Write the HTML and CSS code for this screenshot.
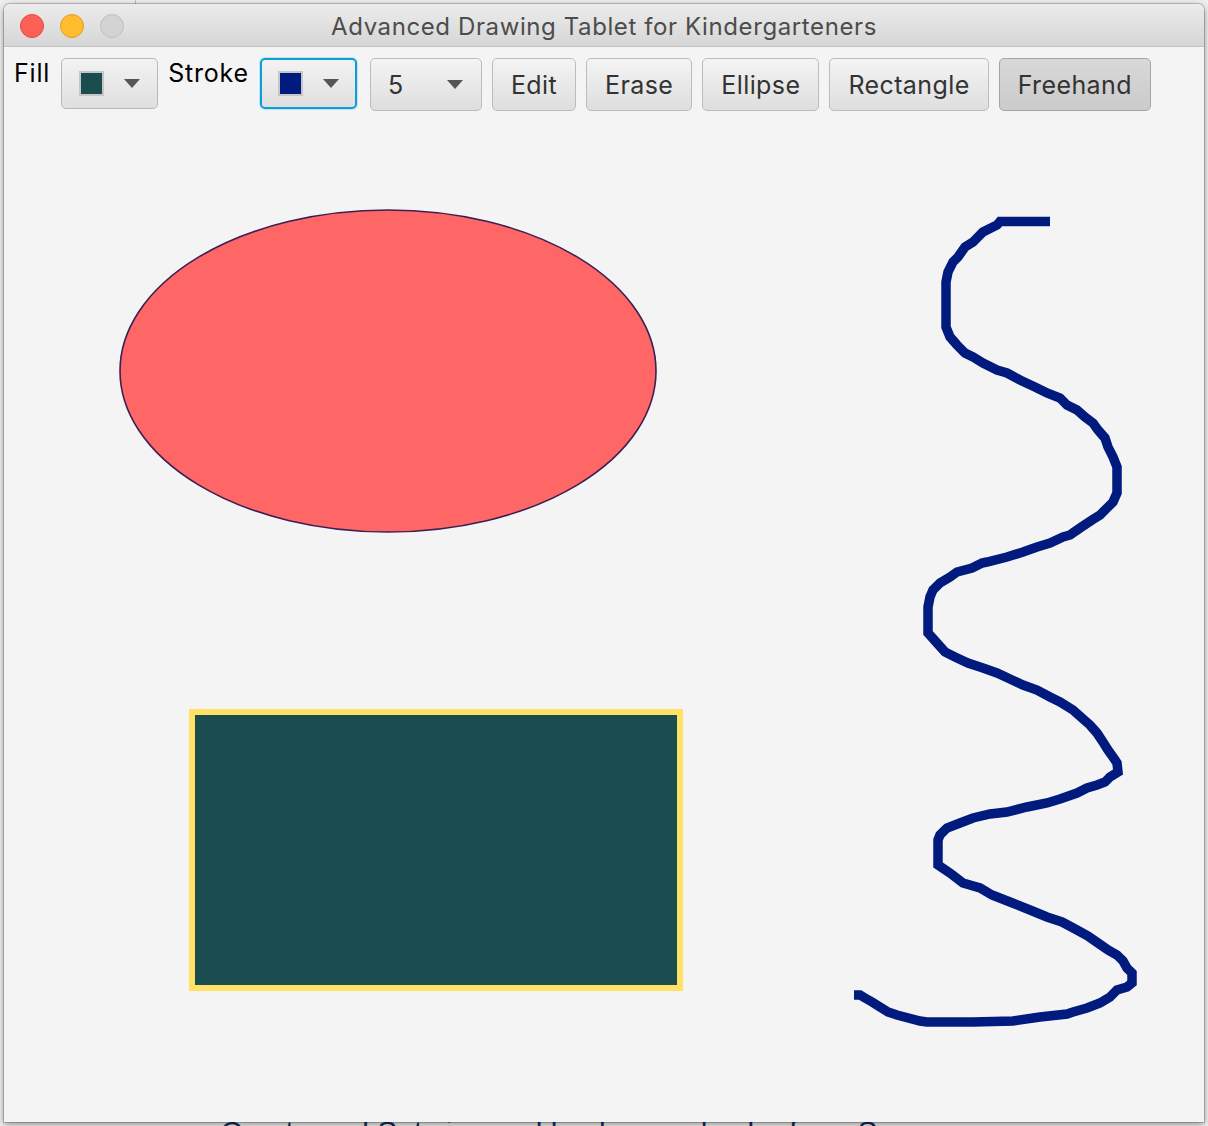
FILE: index.html
```html
<!DOCTYPE html>
<html>
<head>
<meta charset="utf-8">
<title>Advanced Drawing Tablet for Kindergarteners</title>
<link rel="stylesheet" href="styles.css">
</head>
<body>
<div class="desktop">
  <div class="doc-behind">
    <div class="doc-rule"></div>
    <div class="doc-line"><span class="doc-bullet">•</span><span class="doc-text">Create and Set size and background color for a Scene</span></div>
  </div>

  <div class="window">
    <div class="titlebar">
      <div class="lights">
        <span class="light light-close"></span>
        <span class="light light-min"></span>
        <span class="light light-max"></span>
      </div>
      <div class="title">Advanced Drawing Tablet for Kindergarteners</div>
    </div>

    <div class="toolbar">
      <span class="label">Fill</span>
      <div class="picker">
        <span class="swatch swatch-fill"></span>
        <span class="arrow"></span>
      </div>
      <span class="label">Stroke</span>
      <div class="picker picker-focused">
        <span class="swatch swatch-stroke"></span>
        <span class="arrow"></span>
      </div>
      <div class="btn combo">
        <span class="combo-value">5</span>
        <span class="arrow"></span>
      </div>
      <div class="btn">Edit</div>
      <div class="btn">Erase</div>
      <div class="btn">Ellipse</div>
      <div class="btn">Rectangle</div>
      <div class="btn btn-selected">Freehand</div>
    </div>

    <div class="canvas">
      <svg class="drawing" viewBox="4 120 1200 1002" preserveAspectRatio="xMinYMin meet" xmlns="http://www.w3.org/2000/svg">
        <ellipse cx="388" cy="371" rx="268" ry="161" fill="#ff6666" stroke="#3d1f55" stroke-width="1.6"/>
        <rect x="192" y="712" width="488" height="276" fill="#1b4d50" stroke="#ffe265" stroke-width="6"/>
        <polyline fill="none" stroke="#001a7d" stroke-width="9.5" stroke-linejoin="miter" stroke-miterlimit="2" stroke-linecap="butt"
          points="1050,221.5 1000,221.5 997,225 983,232 973,242 965,247 958,257 953,262 948,272 946,282 946,288 946,327 950,337 957,345 965,353 973,357 983,363 997,370 1007,373 1020,380 1037,388 1047,393 1060,398 1067,405 1077,410 1085,417 1093,423 1098,430 1105,438 1108,447 1113,457 1117,467 1117,477 1117,493 1113,502 1107,508 1100,515 1092,520 1080,528 1070,535 1063,537 1050,543 1037,547 1023,552 1007,557 987,562 982,563 972,568 957,572 950,577 940,583 933,590 930,597 928,607 928,620 928,633 937,643 945,652 955,657 968,663 983,668 997,673 1010,679 1023,685 1037,690 1050,697 1060,702 1073,710 1082,718 1090,725 1097,733 1103,742 1108,750 1113,757 1117,763 1118,772 1110,777 1105,782 1097,785 1087,788 1077,793 1060,799 1047,803 1027,807 1007,812 990,814 973,818 960,823 947,828 940,835 938,840 938,865 950,873 963,883 980,888 992,895 1010,902 1030,910 1047,917 1062,922 1077,930 1088,936 1098,943 1108,950 1117,955 1123,961 1127,968 1132,973 1132,983 1127,987 1117,990 1110,997 1100,1003 1087,1008 1073,1012 1067,1014 1040,1017 1013,1021 973,1022 927,1022 920,1021 897,1015 888,1012 880,1007 872,1002 865,998 860,995 854,995"/>
      </svg>
    </div>
  </div>
</div>
</body>
</html>
```

FILE: styles.css
```css
* {
  box-sizing: border-box;
}

html, body {
  margin: 0;
  padding: 0;
}

body {
  width: 1208px;
  height: 1126px;
  overflow: hidden;
  background: #efefef;
  font-family: Inter, "Noto Sans", "Liberation Sans", sans-serif;
}

.desktop {
  position: relative;
  width: 1208px;
  height: 1126px;
  overflow: hidden;
  background: #f0f0f0;
}

/* Document lying behind the window */
.doc-behind {
  position: absolute;
  inset: 0;
}

.doc-rule {
  position: absolute;
  left: 135px;
  top: 0;
  width: 1px;
  height: 6px;
  background: #bcbcbc;
}

.doc-line {
  position: absolute;
  left: 152px;
  top: 1116px;
  display: flex;
  gap: 58px;
  font-family: "Liberation Sans", Arial, sans-serif;
  font-size: 30px;
  line-height: 32px;
  white-space: nowrap;
}

.doc-bullet {
  color: #222;
}

.doc-text {
  color: #1b2a5e;
}

/* Window */
.window {
  position: absolute;
  left: 4px;
  top: 4px;
  width: 1200px;
  height: 1118px;
  display: flex;
  flex-direction: column;
  background: #f4f4f4;
  border-radius: 6px 6px 0 0;
  box-shadow: 0 0 0 1px rgba(0, 0, 0, 0.18), 0 2px 7px rgba(0, 0, 0, 0.45);
  overflow: hidden;
}

.titlebar {
  position: relative;
  height: 43px;
  flex: none;
  display: flex;
  align-items: center;
  justify-content: center;
  background: linear-gradient(#ececec, #d6d6d6);
  border-bottom: 1px solid #c2c2c2;
}

.lights {
  position: absolute;
  left: 16px;
  top: 10px;
  display: flex;
  gap: 16px;
}

.light {
  display: block;
  width: 24px;
  height: 24px;
  border-radius: 50%;
}

.light-close {
  background: #fe5f57;
  border: 1px solid #e2463f;
}

.light-min {
  background: #febc2e;
  border: 1px solid #dea123;
}

.light-max {
  background: #d3d3d3;
  border: 1px solid #c0c0c0;
}

.title {
  font-size: 24px;
  color: #4c4c4c;
  letter-spacing: 0.6px;
  padding-top: 2px;
}

/* Toolbar */
.toolbar {
  height: 73px;
  flex: none;
  display: flex;
  align-items: flex-start;
  padding: 11px 0 0 10px;
  gap: 10px;
  letter-spacing: 0.4px;
}

.label {
  font-size: 25px;
  line-height: 30px;
  color: #000;
  letter-spacing: 0.8px;
}

.label + .picker {
  margin-left: 1px;
}

.picker {
  width: 97px;
  height: 51px;
  display: flex;
  align-items: center;
  padding-left: 17px;
  gap: 20px;
  border: 1.5px solid #b8b8b8;
  border-radius: 5px;
  background: linear-gradient(#f3f3f3, #dfdfdf);
}

.picker-focused {
  border: 2px solid #0b9fd8;
  box-shadow: 0 0 0 1px #bfe3f2;
  padding-left: 16px;
}

.swatch {
  display: block;
  width: 25px;
  height: 25px;
  border: 2px solid #c6c6c6;
}

.swatch-fill {
  background: #1b4d50;
}

.swatch-stroke {
  background: #001a7d;
}

.arrow {
  display: block;
  width: 0;
  height: 0;
  border-left: 8px solid transparent;
  border-right: 8px solid transparent;
  border-top: 9px solid #555;
}

.btn {
  height: 53px;
  padding: 0 18px;
  display: flex;
  align-items: center;
  justify-content: center;
  font-size: 25px;
  color: #333;
  border: 1.5px solid #bcbcbc;
  border-radius: 5px;
  background: linear-gradient(#f4f4f4, #dedede);
  white-space: nowrap;
}

.combo {
  width: 112px;
  justify-content: space-between;
  padding: 0 18px 0 17px;
  margin-left: 3px;
}

.btn-selected {
  background: linear-gradient(#d8d8d8, #cbcbcb);
  border-color: #a6a6a6;
}

/* Canvas */
.canvas {
  flex: 1;
  min-height: 0;
}

.drawing {
  display: block;
  width: 1200px;
  height: 1002px;
}
```
